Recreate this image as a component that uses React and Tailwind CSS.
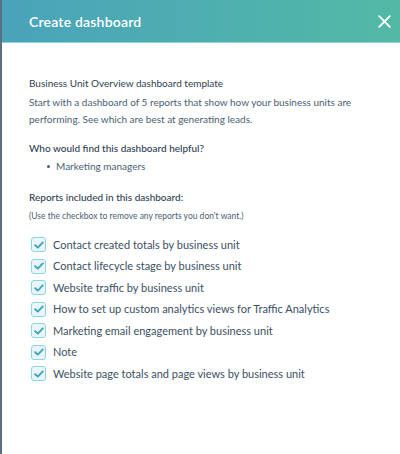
import React from "react";

const reports = [
  "Contact created totals by business unit",
  "Contact lifecycle stage by business unit",
  "Website traffic by business unit",
  "How to set up custom analytics views for Traffic Analytics",
  "Marketing email engagement by business unit",
  "Note",
  "Website page totals and page views by business unit",
];

function Check() {
  return (
    <span className="flex h-[15px] w-[15px] shrink-0 items-center justify-center rounded-[3px] border border-[#8ad5e0] bg-[#e8f6f9]">
      <svg width="10" height="8" viewBox="0 0 10 8">
        <path d="M1.2 4.2 L3.8 6.6 L8.8 1.4" fill="none" stroke="#3fa5bf" strokeWidth="1.9" strokeLinecap="round" strokeLinejoin="round" />
      </svg>
    </span>
  );
}

export default function App() {
  return (
    <div className="flex h-[454px] w-[400px] bg-white text-[#33475b]" style={{ fontFamily: "Lato, 'Open Sans', sans-serif" }}>
      <div className="w-[2px] shrink-0 bg-[#5d6e80]" />
      <div className="flex min-w-0 flex-1 flex-col">
        <div className="flex h-[43px] items-center justify-between border-b border-[#8fd2d8] bg-gradient-to-r from-[#4aa3ba] to-[#53b9a5] pl-[27px] pr-[9px]">
          <div className="text-[14px] font-semibold tracking-[0.2px] text-white">Create dashboard</div>
          <svg width="13" height="13" viewBox="0 0 13 13">
            <path d="M1.2 1.2 L11.8 11.8 M11.8 1.2 L1.2 11.8" stroke="white" strokeWidth="1.9" strokeLinecap="round" />
          </svg>
        </div>
        <div className="flex flex-col pl-[27px] pr-3 pt-[33px]">
          <div className="text-[10px] leading-[15px] text-[#2d3e50]">Business Unit Overview dashboard template</div>
          <div className="mt-[3px] text-[10px] leading-[17px] text-[#4a5e72]">
            Start with a dashboard of 5 reports that show how your business units are performing. See which are best at generating leads.
          </div>
          <div className="mt-[13px] text-[10px] font-medium leading-[15px] text-[#2d3e50]">Who would find this dashboard helpful?</div>
          <ul className="mt-[2px] pl-[27px] text-[10px] leading-[17px] text-[#4a5e72]">
            <li className="relative">
              <span className="absolute left-[-9px] top-[7px] h-[3px] w-[3px] rounded-full bg-[#4a5e72]" />
              Marketing managers
            </li>
          </ul>
          <div className="mt-[15px] text-[10px] font-medium leading-[15px] text-[#2d3e50]">Reports included in this dashboard:</div>
          <div className="mt-[5px] text-[8.5px] leading-[13px] text-[#4a5e72]">(Use the checkbox to remove any reports you don't want.)</div>
          <div className="mt-[11px] flex flex-col">
            {reports.map((r) => (
              <div key={r} className="flex h-[21.5px] items-center gap-[7px] pl-[2px]">
                <Check />
                <span className="text-[11px] text-[#3b4f63]">{r}</span>
              </div>
            ))}
          </div>
        </div>
      </div>
    </div>
  );
}
